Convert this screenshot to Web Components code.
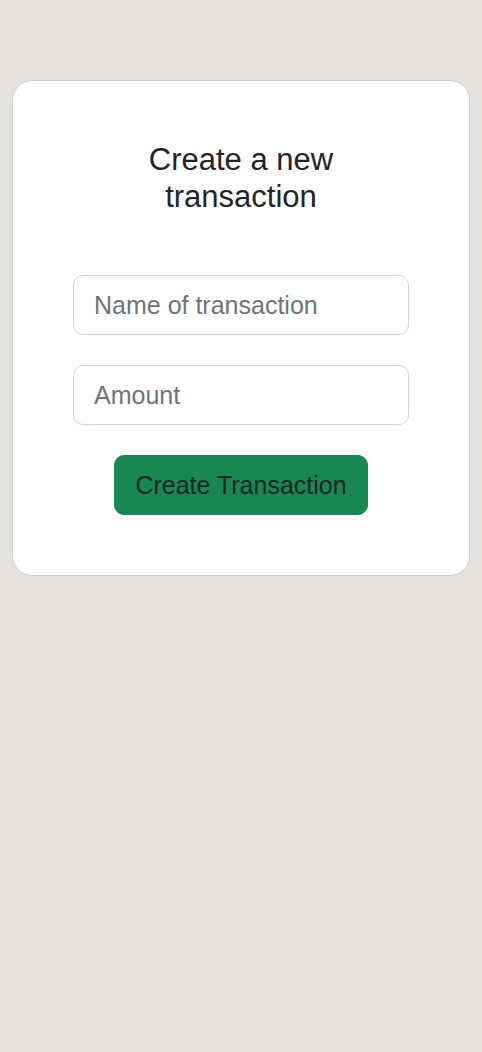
<!DOCTYPE html>
<html lang="en">
<head>
<meta charset="utf-8">
<meta name="viewport" content="width=device-width, initial-scale=1">
<title>Create a new transaction</title>
<style>
  body {
    margin: 0;
    background: #e4e3e1;
    color: #212529;
    font-family: "Liberation Sans", Arial, sans-serif;
    font-size: 25px;
    line-height: 38px;
  }
</style>
</head>
<body>
<transaction-page>
  <form-card>
    <span slot="title">Create a new transaction</span>
    <text-field label="Name of transaction"></text-field>
    <text-field label="Amount" inputmode="decimal"></text-field>
    <action-button>Create Transaction</action-button>
  </form-card>
</transaction-page>

<script>
  class ShadowElement extends HTMLElement {
    constructor() {
      super();
      this.attachShadow({ mode: "open" }).innerHTML = this.constructor.markup;
    }
  }

  customElements.define("transaction-page", class extends ShadowElement {
    static markup = `
      <style>
        :host { display: block; padding: 80px 12px; }
        main { max-width: 720px; margin: 0 auto; }
      </style>
      <main><slot></slot></main>`;
  });

  customElements.define("form-card", class extends ShadowElement {
    static markup = `
      <style>
        :host {
          display: block;
          padding: 60px;
          background: #fff;
          border: 1px solid #d0d0d1;
          border-radius: 20px;
        }
        h1 {
          margin: 0 0 60px;
          font-size: 31px;
          font-weight: 400;
          line-height: 37px;
          text-align: center;
        }
        form {
          display: flex;
          flex-direction: column;
          align-items: center;
          gap: 30px;
        }
      </style>
      <h1><slot name="title"></slot></h1>
      <form><slot></slot></form>`;
  });

  customElements.define("text-field", class extends ShadowElement {
    static markup = `
      <style>
        :host { display: block; width: 100%; }
        input {
          display: block;
          box-sizing: border-box;
          width: 100%;
          height: 60px;
          margin: 0;
          padding: 10px 20px;
          border: 1px solid #ced4da;
          border-radius: 10px;
          background: #fff;
          color: inherit;
          font: inherit;
        }
        input::placeholder { color: #6c757d; opacity: 1; }
        input:focus { outline: 4px solid #c2dbfe; }
      </style>
      <input type="text">`;

    connectedCallback() {
      const input = this.shadowRoot.querySelector("input");
      const label = this.getAttribute("label");
      input.placeholder = label;
      input.setAttribute("aria-label", label);
      if (this.hasAttribute("inputmode")) input.inputMode = this.getAttribute("inputmode");
    }
  });

  customElements.define("action-button", class extends ShadowElement {
    static markup = `
      <style>
        :host { display: block; }
        button {
          display: block;
          margin: 0;
          padding: 10px 20px;
          border: 1px solid #198754;
          border-radius: 10px;
          background: #198754;
          color: inherit;
          font: inherit;
          cursor: pointer;
        }
        button:hover { background: #157347; }
      </style>
      <button type="button"><slot></slot></button>`;
  });
</script>
</body>
</html>
